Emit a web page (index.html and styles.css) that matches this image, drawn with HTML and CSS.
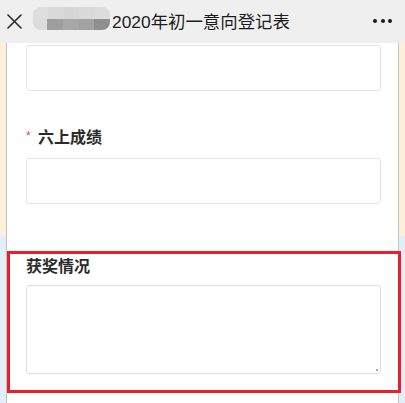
FILE: index.html
```html
<!DOCTYPE html>
<html lang="zh-CN">
<head>
<meta charset="utf-8">
<title>2020年初一意向登记表</title>
<link rel="stylesheet" href="styles.css">
</head>
<body>
<div class="page">
  <header class="topbar">
    <svg class="close" width="15" height="15" viewBox="0 0 15 15" aria-hidden="true">
      <path d="M1 1 L14 14 M14 1 L1 14" stroke="#2a2a2a" stroke-width="1.6" fill="none" stroke-linecap="round"/>
    </svg>
    <div class="mosaic" aria-hidden="true">
      <div class="mosaic-row light">
        <span></span><span></span><span></span><span></span><span></span>
      </div>
      <div class="mosaic-row dark">
        <span class="c1"></span><span class="c2"></span><span class="c3"></span><span class="c4"></span><span class="c5"></span>
      </div>
    </div>
    <div class="title">2020年初一意向登记表</div>
    <div class="more" aria-label="更多"><i></i><i></i><i></i></div>
  </header>
  <main class="card">
    <div class="field first">
      <input class="box" type="text">
    </div>
    <div class="field">
      <div class="label"><span class="req">*</span>六上成绩</div>
      <input class="box" type="text">
    </div>
    <div class="field highlight">
      <div class="label">获奖情况</div>
      <div class="area-wrap">
        <textarea class="box area"></textarea>
        <span class="grip" aria-hidden="true"></span>
      </div>
    </div>
  </main>
</div>
</body>
</html>
```

FILE: styles.css
```css
html, body {
  margin: 0;
  padding: 0;
}
body {
  width: 405px;
  height: 403px;
  overflow: hidden;
  font-family: "Liberation Sans", "Noto Sans CJK SC", sans-serif;
  background: linear-gradient(to bottom, #fcf0dd 0, #fcf0dd 236px, #e3eef9 236px, #e3eef9 100%);
}
.page {
  display: flex;
  flex-direction: column;
  height: 403px;
}
.topbar {
  height: 43px;
  flex: none;
  background: #efefef;
  display: flex;
  align-items: center;
  box-sizing: border-box;
  padding-left: 7px;
  padding-right: 13px;
  position: relative;
  z-index: 2;
}
.close {
  flex: none;
  display: block;
}
.mosaic {
  flex: none;
  width: 77px;
  height: 23px;
  margin-left: 11px;
  margin-top: -6px;
  border-radius: 8px;
  overflow: hidden;
  display: flex;
  flex-direction: column;
  background: #e2e2e2;
}
.mosaic-row {
  display: flex;
  flex: 1;
}
.mosaic-row span {
  flex: 1;
}
.mosaic-row.light span:nth-child(1) { background: #dedede; }
.mosaic-row.light span:nth-child(2) { background: #d9d9d9; }
.mosaic-row.light span:nth-child(3) { background: #d6d6d6; }
.mosaic-row.light span:nth-child(4) { background: #dadada; }
.mosaic-row.light span:nth-child(5) { background: #dcdcdc; }
.mosaic-row.dark .c1 { background: #dcdcdc; flex: 0.9; }
.mosaic-row.dark .c2 { background: #9e9e9e; }
.mosaic-row.dark .c3 { background: #a8a8a8; }
.mosaic-row.dark .c4 { background: #a2a2a2; }
.mosaic-row.dark .c5 { background: #8f8f8f; }
.title {
  flex: 1;
  margin-left: 2px;
  font-size: 17.4px;
  color: #1c1c1c;
  white-space: nowrap;
  line-height: 22px;
}
.more {
  flex: none;
  display: flex;
  gap: 3.5px;
  margin-top: -1px;
}
.more i {
  display: block;
  width: 4px;
  height: 4px;
  border-radius: 50%;
  background: #1a1a1a;
}
.card {
  flex: 1;
  margin: 0 6px;
  background: #fff;
  border-left: 1px solid #c4c4c4;
  border-right: 1px solid #c4c4c4;
  padding: 0 17px 0 19px;
  position: relative;
}
.field {
  display: flex;
  flex-direction: column;
}
.field.first {
  margin-top: 2px;
}
.label {
  font-size: 16px;
  font-weight: bold;
  color: #2b2b2b;
  line-height: 22px;
  display: flex;
  align-items: center;
}
.req {
  color: #f0474d;
  font-size: 12px;
  font-weight: normal;
  width: 12px;
  margin-top: -4px;
}
.field:nth-child(2) {
  margin-top: 36px;
}
.field:nth-child(2) .box {
  margin-top: 9px;
}
.box {
  display: block;
  width: 100%;
  box-sizing: border-box;
  height: 46px;
  border: 1px solid #e4e4e4;
  border-radius: 3px;
  background: #fff;
  margin: 0;
  padding: 0 8px;
  font: inherit;
  outline: none;
}
.field.highlight {
  margin-top: 52px;
  position: relative;
}
.area-wrap {
  position: relative;
  margin-top: 7px;
}
.area {
  height: 89px;
  resize: none;
  border-color: #dedede;
}
.grip {
  position: absolute;
  right: 3px;
  bottom: 3px;
  width: 2px;
  height: 2px;
  background: #8a8a8a;
  border-radius: 1px;
}
.field.highlight::after {
  content: "";
  position: absolute;
  left: -19px;
  right: -20px;
  top: -5px;
  bottom: -19px;
  border: 3px solid #e8202b;
  pointer-events: none;
}
```
